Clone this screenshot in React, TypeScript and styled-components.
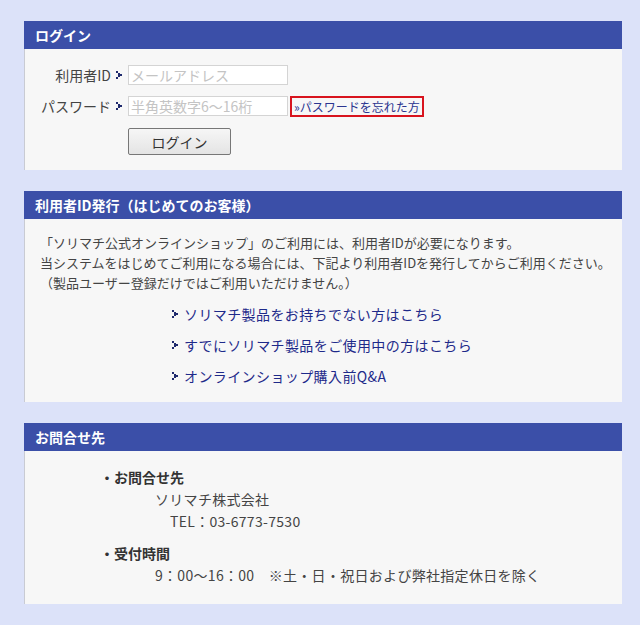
import React from 'react';
import styled, { createGlobalStyle } from 'styled-components';

const GlobalStyle = createGlobalStyle`
  html, body {
    margin: 0;
    padding: 0;
    background: #dce2f9;
  }
  body {
    font-family: "Noto Sans CJK JP", "Liberation Sans", sans-serif;
    color: #333;
  }
`;

const Page = styled.div`
  display: flex;
  flex-direction: column;
  gap: 21px;
  padding: 21px 18px 20px 24px;
`;

const Panel = styled.section`
  display: flex;
  flex-direction: column;
`;

const PanelHeader = styled.h2`
  margin: 0;
  height: 28px;
  padding: 0 11px;
  background: #3b4fa8;
  color: #fff;
  font-size: 14px;
  font-weight: bold;
  line-height: 28px;
`;

const PanelBody = styled.div<{ $pad: string }>`
  background: #f7f7f7;
  border-left: 1px solid #c9cbd3;
  padding: ${(p) => p.$pad};
`;

const FormRow = styled.div`
  display: flex;
  align-items: center;
  height: 20px;
  margin-bottom: 11px;
`;

const Label = styled.span`
  width: 86px;
  text-align: right;
  font-size: 14px;
  color: #444;
`;

const Marker = ({ gap = 6 }: { gap?: number }) => (
  <svg width="6" height="8" viewBox="0 0 6 8" style={{ margin: `0 ${gap}px 0 5px`, flexShrink: 0 }}>
    <rect x="0" y="0" width="2" height="2" fill="#1f2a6e" />
    <rect x="2" y="2" width="2" height="2" fill="#1f2a6e" />
    <rect x="4" y="3" width="2" height="2" fill="#1f2a6e" />
    <rect x="2" y="4" width="2" height="2" fill="#1f2a6e" />
    <rect x="0" y="6" width="2" height="2" fill="#1f2a6e" />
  </svg>
);

const Input = styled.input`
  box-sizing: border-box;
  width: 160px;
  height: 20px;
  padding: 0 2px;
  border: 1px solid #d4d4d4;
  background: #fff;
  font-family: inherit;
  font-size: 14px;
  color: #333;
  outline: none;
  &::placeholder {
    color: #c4c4c4;
  }
`;

const ForgotLink = styled.a`
  box-sizing: border-box;
  margin-left: 2px;
  height: 21px;
  padding: 0 2px;
  border: 2px solid #d8141e;
  font-size: 12px;
  line-height: 17px;
  color: #2b3590;
  text-decoration: none;
`;

const LoginButton = styled.button`
  box-sizing: border-box;
  margin-left: 103px;
  margin-top: 1px;
  width: 103px;
  height: 27px;
  border: 1px solid #777;
  border-radius: 2px;
  background: linear-gradient(#f6f6f6, #e4e4e4);
  font-family: inherit;
  font-size: 14px;
  color: #333;
`;

const Paragraph = styled.p`
  margin: 0;
  font-size: 13px;
  line-height: 20px;
  color: #444;
`;

const LinkList = styled.ul`
  list-style: none;
  margin: 11px 0 0;
  padding: 0 0 0 127px;
  display: flex;
  flex-direction: column;
  gap: 11px;
`;

const LinkItem = styled.li`
  display: flex;
  align-items: center;
  height: 20px;
  a {
    font-size: 14px;
    letter-spacing: 0.4px;
    color: #1e2a8a;
    text-decoration: none;
  }
`;

const InfoTitle = styled.div`
  font-size: 14px;
  font-weight: bold;
  color: #333;
  line-height: 22px;
`;

const InfoLine = styled.div<{ $indent: number }>`
  padding-left: ${(p) => p.$indent}px;
  font-size: 14px;
  color: #444;
  line-height: 22px;
  letter-spacing: 0.3px;
`;

const InfoGroup = styled.div`
  display: flex;
  flex-direction: column;
  & + & {
    margin-top: 10px;
  }
`;

export default function App() {
  return (
    <>
      <GlobalStyle />
      <Page>
        <Panel>
          <PanelHeader>ログイン</PanelHeader>
          <PanelBody $pad="16px 0 15px 0">
            <FormRow>
              <Label>利用者ID</Label>
              <Marker />
              <Input placeholder="メールアドレス" />
            </FormRow>
            <FormRow>
              <Label>パスワード</Label>
              <Marker />
              <Input type="password" placeholder="半角英数字6～16桁" />
              <ForgotLink href="#">»パスワードを忘れた方</ForgotLink>
            </FormRow>
            <LoginButton>ログイン</LoginButton>
          </PanelBody>
        </Panel>

        <Panel>
          <PanelHeader>利用者ID発行（はじめてのお客様）</PanelHeader>
          <PanelBody $pad="14px 0 16px 15px">
            <Paragraph>「ソリマチ公式オンラインショップ」のご利用には、利用者IDが必要になります。</Paragraph>
            <Paragraph>当システムをはじめてご利用になる場合には、下記より利用者IDを発行してからご利用ください。</Paragraph>
            <Paragraph>（製品ユーザー登録だけではご利用いただけません。）</Paragraph>
            <LinkList>
              <LinkItem>
                <Marker />
                <a href="#">ソリマチ製品をお持ちでない方はこちら</a>
              </LinkItem>
              <LinkItem>
                <Marker />
                <a href="#">すでにソリマチ製品をご使用中の方はこちら</a>
              </LinkItem>
              <LinkItem>
                <Marker />
                <a href="#">オンラインショップ購入前Q&amp;A</a>
              </LinkItem>
            </LinkList>
          </PanelBody>
        </Panel>

        <Panel>
          <PanelHeader>お問合せ先</PanelHeader>
          <PanelBody $pad="15px 0 18px 75px">
            <InfoGroup>
              <InfoTitle>・お問合せ先</InfoTitle>
              <InfoLine $indent={55}>ソリマチ株式会社</InfoLine>
              <InfoLine $indent={70}>TEL：03-6773-7530</InfoLine>
            </InfoGroup>
            <InfoGroup>
              <InfoTitle>・受付時間</InfoTitle>
              <InfoLine $indent={55}>9：00～16：00　※土・日・祝日および弊社指定休日を除く</InfoLine>
            </InfoGroup>
          </PanelBody>
        </Panel>
      </Page>
    </>
  );
}
